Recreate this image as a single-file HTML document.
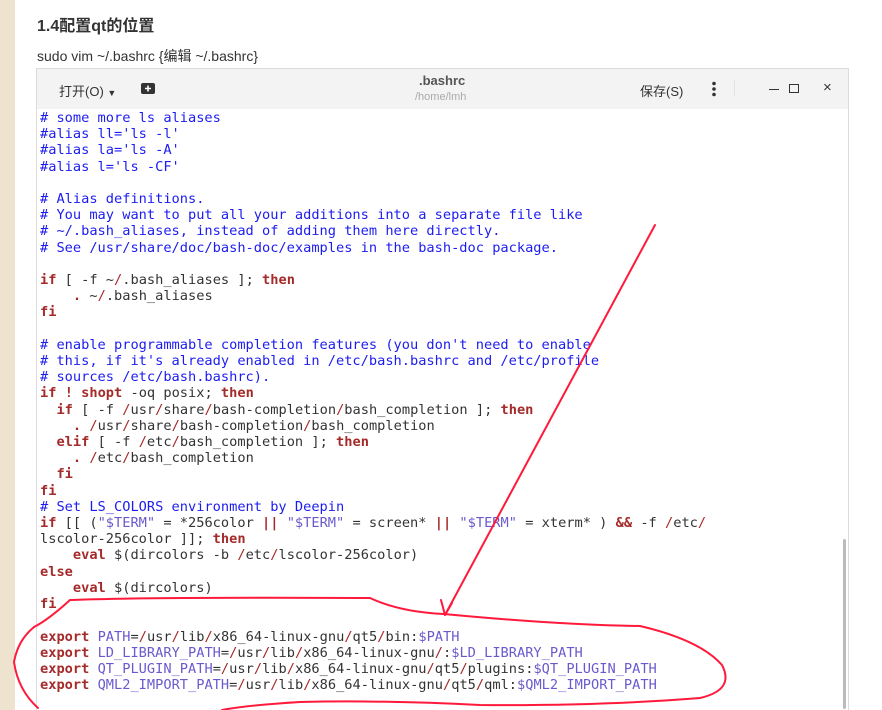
<!DOCTYPE html>
<html><head><meta charset="utf-8">
<style>
html,body{margin:0;padding:0;width:882px;height:710px;overflow:hidden;background:#fff;position:relative;font-family:"Liberation Sans","Noto Sans CJK SC",sans-serif}
.strip{position:absolute;left:0;top:0;width:15px;height:710px;background:#eee3cf}
h1{position:absolute;left:37px;top:12px;margin:0;font-size:16px;font-weight:bold;color:#333}
.sub{position:absolute;left:37px;top:46px;font-size:14px;color:#333}
.win{position:absolute;left:36px;top:68px;width:811px;height:650px;border:1px solid #dcdcdc;background:#fff}
.hdr{position:absolute;left:0;top:0;width:811px;height:40px;background:#f3f3f3}
.t{position:absolute;font-size:13px;color:#333}
pre{position:absolute;left:3px;top:41px;margin:0;font-family:"DejaVu Sans Mono",monospace;font-size:13.67px;line-height:16.2px;color:#333}
.c{color:#1c1cf0}.k{color:#a52a2a;font-weight:bold}.v{color:#6a5acd}.r{color:#a52a2a}
.sb{position:absolute;left:806px;top:470px;width:3px;height:170px;background:#bbb;border-radius:2px}
</style></head><body>
<div class="strip"></div>
<h1>1.4配置qt的位置</h1>
<div class="sub">sudo vim ~/.bashrc {编辑 ~/.bashrc}</div>
<div class="win">
 <div class="hdr">
  <div class="t" style="left:22px;top:12px">打开(O) <span style="font-size:9px">▼</span></div>
  <svg style="position:absolute;left:104px;top:13px" width="14" height="12"><rect x="0" y="1" width="14" height="11" rx="2" fill="#333"/><path d="M7 3.5v6M4 6.5h6" stroke="#fff" stroke-width="1.6"/></svg>
  <div class="t" style="left:382px;top:4px;font-weight:bold;color:#555">.bashrc</div>
  <div class="t" style="left:378px;top:22px;font-size:11px;color:#aaa">/home/lmh</div>
  <div class="t" style="left:603px;top:12px">保存(S)</div>
  <svg style="position:absolute;left:674px;top:12px" width="6" height="16"><circle cx="3" cy="2.5" r="1.8" fill="#333"/><circle cx="3" cy="8" r="1.8" fill="#333"/><circle cx="3" cy="13.5" r="1.8" fill="#333"/></svg>
  <div style="position:absolute;left:697px;top:11px;width:1px;height:16px;background:#e2e2e2"></div>
  <div style="position:absolute;left:732px;top:20px;width:10px;height:1px;background:#333"></div>
  <div style="position:absolute;left:752px;top:15px;width:8px;height:7px;border:1px solid #333"></div>
  <div class="t" style="left:786px;top:10px;font-size:15px">×</div>
 </div>
<pre><span class="c"># some more ls aliases
#alias ll='ls -l'
#alias la='ls -A'
#alias l='ls -CF'

# Alias definitions.
# You may want to put all your additions into a separate file like
# ~/.bash_aliases, instead of adding them here directly.
# See /usr/share/doc/bash-doc/examples in the bash-doc package.</span>

<span class="k">if</span> [ -f ~<span class="r">/</span>.bash_aliases ]; <span class="k">then</span>
    <span class="k">.</span> ~<span class="r">/</span>.bash_aliases
<span class="k">fi</span>

<span class="c"># enable programmable completion features (you don't need to enable
# this, if it's already enabled in /etc/bash.bashrc and /etc/profile
# sources /etc/bash.bashrc).</span>
<span class="k">if</span> <span class="k">! shopt</span> -oq posix; <span class="k">then</span>
  <span class="k">if</span> [ -f <span class="r">/</span>usr<span class="r">/</span>share<span class="r">/</span>bash-completion<span class="r">/</span>bash_completion ]; <span class="k">then</span>
    <span class="k">.</span> <span class="r">/</span>usr<span class="r">/</span>share<span class="r">/</span>bash-completion<span class="r">/</span>bash_completion
  <span class="k">elif</span> [ -f <span class="r">/</span>etc<span class="r">/</span>bash_completion ]; <span class="k">then</span>
    <span class="k">.</span> <span class="r">/</span>etc<span class="r">/</span>bash_completion
  <span class="k">fi</span>
<span class="k">fi</span>
<span class="c"># Set LS_COLORS environment by Deepin</span>
<span class="k">if</span> [[ (<span class="v">"$TERM"</span> = *256color <span class="k">||</span> <span class="v">"$TERM"</span> = screen* <span class="k">||</span> <span class="v">"$TERM"</span> = xterm* ) <span class="k">&amp;&amp;</span> -f <span class="r">/</span>etc<span class="r">/</span>
lscolor-256color ]]; <span class="k">then</span>
    <span class="k">eval</span> $(dircolors -b <span class="r">/</span>etc<span class="r">/</span>lscolor-256color)
<span class="k">else</span>
    <span class="k">eval</span> $(dircolors)
<span class="k">fi</span>

<span class="k">export</span> <span class="v">PATH</span>=<span class="r">/</span>usr<span class="r">/</span>lib<span class="r">/</span>x86_64-linux-gnu<span class="r">/</span>qt5<span class="r">/</span>bin:<span class="v">$PATH</span>
<span class="k">export</span> <span class="v">LD_LIBRARY_PATH</span>=<span class="r">/</span>usr<span class="r">/</span>lib<span class="r">/</span>x86_64-linux-gnu<span class="r">/</span>:<span class="v">$LD_LIBRARY_PATH</span>
<span class="k">export</span> <span class="v">QT_PLUGIN_PATH</span>=<span class="r">/</span>usr<span class="r">/</span>lib<span class="r">/</span>x86_64-linux-gnu<span class="r">/</span>qt5<span class="r">/</span>plugins:<span class="v">$QT_PLUGIN_PATH</span>
<span class="k">export</span> <span class="v">QML2_IMPORT_PATH</span>=<span class="r">/</span>usr<span class="r">/</span>lib<span class="r">/</span>x86_64-linux-gnu<span class="r">/</span>qt5<span class="r">/</span>qml:<span class="v">$QML2_IMPORT_PATH</span></pre>
 <div class="sb"></div>
</div>
<svg style="position:absolute;left:0;top:0" width="882" height="710">
 <g fill="none" stroke="#ff1a3c" stroke-width="2" stroke-linecap="round">
  <path d="M655 225 L445 615"/>
  <path d="M445 615 L441 600 M445 615 L452 603"/>
  <path d="M34 627 Q48 620 70 600 Q150 597 370 598 Q400 612 444 614 Q560 625 640 626 Q700 640 722 665 Q735 690 700 698 Q600 706 480 705 Q380 700 300 702 Q250 705 222 710"/>
  <path d="M34 627 Q18 640 14 662 Q18 690 38 708"/>
 </g>
</svg>
</body></html>
